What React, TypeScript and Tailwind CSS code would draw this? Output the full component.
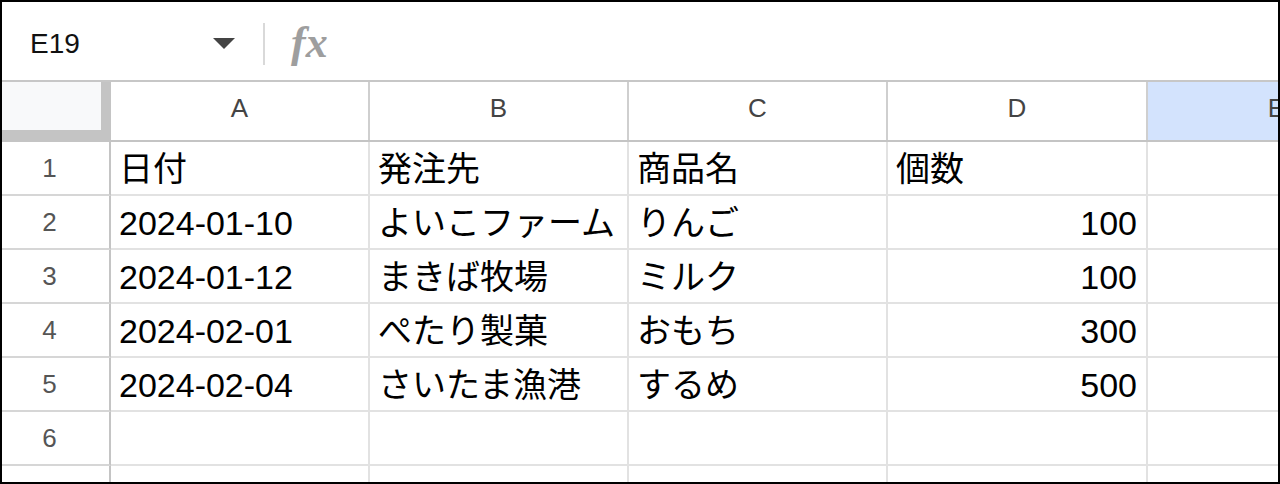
import React from "react";

const cols = ["A", "B", "C", "D", "E"];
const rows: { n: number; cells: (string | null)[] }[] = [
  { n: 1, cells: ["日付", "発注先", "商品名", "個数", null] },
  { n: 2, cells: ["2024-01-10", "よいこファーム", "りんご", "100", null] },
  { n: 3, cells: ["2024-01-12", "まきば牧場", "ミルク", "100", null] },
  { n: 4, cells: ["2024-02-01", "ぺたり製菓", "おもち", "300", null] },
  { n: 5, cells: ["2024-02-04", "さいたま漁港", "するめ", "500", null] },
  { n: 6, cells: [null, null, null, null, null] },
  { n: 7, cells: [null, null, null, null, null] },
];

const colW = ["w-[259px]", "w-[259px]", "w-[259px]", "w-[260px]", "w-[259px]"];

export default function App() {
  return (
    <div className="w-[1280px] h-[484px] border-2 border-black bg-white overflow-hidden font-['Liberation_Sans','Noto_Sans_CJK_JP',sans-serif] text-black">
      {/* toolbar */}
      <div className="h-[80px] border-b-2 border-[#c7c7c7] flex items-center pt-[6px]">
        <div className="w-[205px] pl-[28px] text-[28px] leading-none text-[#111]">E19</div>
        <svg width="22" height="11" viewBox="0 0 22 11" className="ml-[6px] -mt-[2px]">
          <path d="M0 0 L22 0 L11 11 Z" fill="#444" />
        </svg>
        <div className="ml-[28px] w-[2px] h-[42px] bg-[#d9d9d9]" />
        <div className="ml-[26px] text-[44px] leading-none italic font-semibold text-[#9e9e9e] font-['Liberation_Serif',serif] -mt-[2px]">
          fx
        </div>
      </div>
      {/* header row */}
      <div className="flex h-[60px] border-b-2 border-[#c4c4c4]">
        <div className="w-[109px] shrink-0 flex bg-[#f8f9fa]">
          <div className="w-[99px] flex flex-col">
            <div className="flex-1" />
            <div className="h-[10px] bg-[#c4c4c4]" />
          </div>
          <div className="w-[10px] bg-[#c4c4c4]" />
        </div>
        {cols.map((c, i) => (
          <div
            key={c}
            className={`${colW[i]} shrink-0 flex items-center justify-center pb-[6px] text-[26px] leading-none text-[#444] border-r-2 border-[#cfcfcf] ${
              c === "E" ? "bg-[#d3e3fd]" : "bg-white"
            }`}
          >
            {c}
          </div>
        ))}
      </div>
      {/* body rows */}
      {rows.map((r) => (
        <div key={r.n} className="flex h-[54px]">
          <div className="w-[109px] shrink-0 flex items-center justify-center pr-[12px] text-[26px] leading-none text-[#555] border-r-2 border-b-2 border-r-[#c4c4c4] border-b-[#d6d6d6] bg-white">
            {r.n}
          </div>
          {r.cells.map((v, i) => (
            <div
              key={i}
              className={`${colW[i]} shrink-0 flex items-center pt-[2px] text-[34px] leading-none whitespace-nowrap overflow-hidden border-r-2 border-b-2 border-[#e2e2e2] ${
                i === 3 && r.n > 1 ? "justify-end pr-[9px]" : "pl-[8px]"
              }`}
            >
              {v}
            </div>
          ))}
        </div>
      ))}
    </div>
  );
}
